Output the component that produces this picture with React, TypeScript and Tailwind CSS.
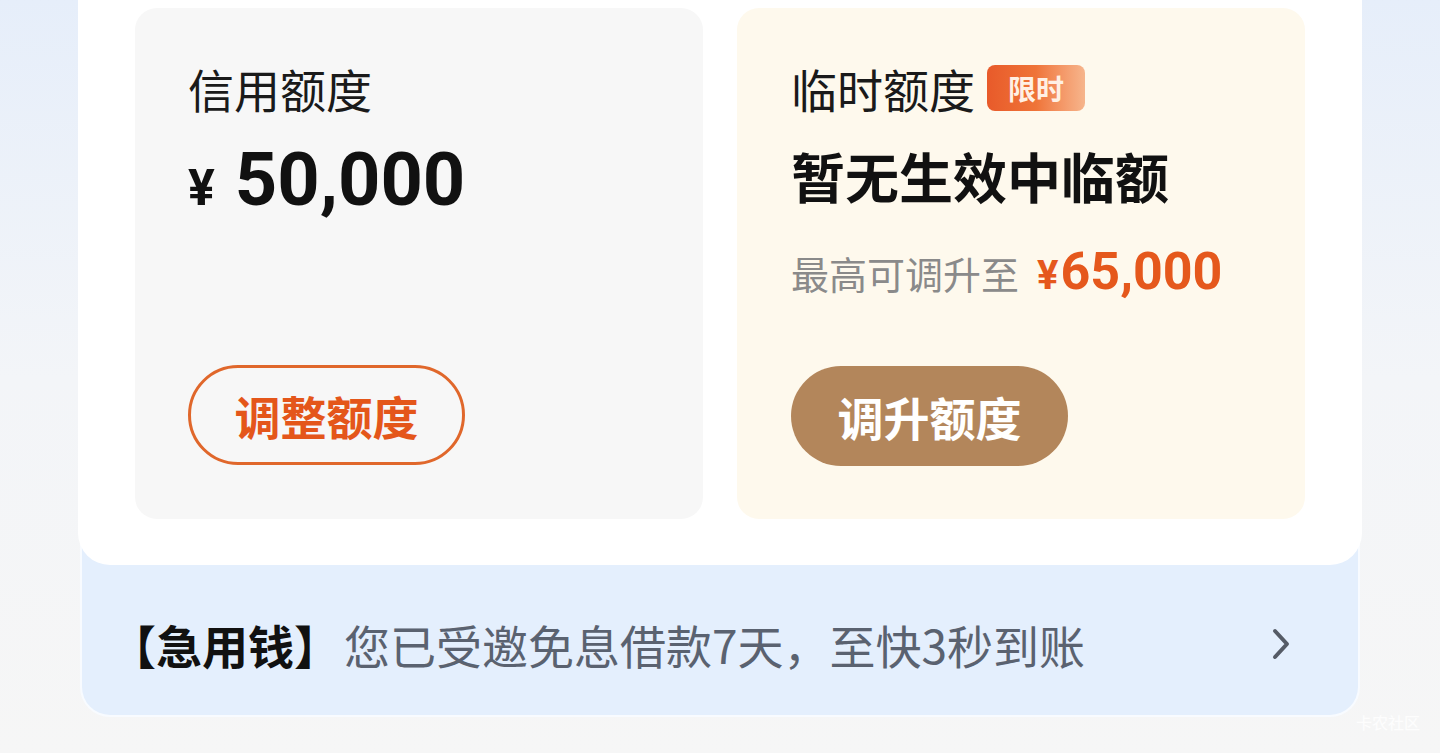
const cjk = "font-['Noto_Sans_CJK_SC','Noto_Sans',sans-serif]";
const num = "font-['Roboto','Noto_Sans_CJK_SC',sans-serif]";

function ChevronRight() {
  return (
    <svg width="22" height="34" viewBox="0 0 22 34" fill="none">
      <polyline
        points="5,4 17,17 5,30"
        stroke="#555b66"
        strokeWidth="4"
        strokeLinecap="round"
        strokeLinejoin="round"
      />
    </svg>
  );
}

export default function App() {
  return (
    <div className={`relative min-h-screen overflow-hidden bg-gradient-to-b from-[#e6eefa] via-[#f3f5f8] to-[#f6f6f6] ${cjk}`}>
      <div className="mx-auto w-[1284px]">
        {/* Quota card */}
        <div className="relative z-10 grid grid-cols-2 gap-[34px] rounded-b-[32px] bg-white px-[57px] pt-[8px] pb-[46px]">
          {/* Credit limit */}
          <div className="flex h-[511px] flex-col rounded-[22px] bg-[#f7f7f7] pl-[53px] pt-[56px] pb-[54px]">
            <div className="text-[46px] leading-[48px] text-[#1a1a1a]">信用额度</div>
            <div className={`mt-[28px] flex items-baseline gap-[20px] text-[#111] ${num}`}>
              <span className="text-[50px] font-bold leading-[80px]">¥</span>
              <span className="text-[74px] font-bold leading-[80px]">50,000</span>
            </div>
            <button className="mt-auto flex h-[100px] w-[277px] items-center justify-center rounded-full border-[3px] border-[#e0672b] text-[46px] font-bold text-[#e4561a]">
              调整额度
            </button>
          </div>

          {/* Temporary limit */}
          <div className="flex h-[511px] flex-col rounded-[22px] bg-[#fef9ed] pl-[54px] pt-[56px] pb-[53px]">
            <div className="flex items-center">
              <span className="text-[46px] leading-[48px] text-[#1a1a1a]">临时额度</span>
              <span className="ml-[12px] flex h-[46px] w-[98px] items-center justify-center rounded-[8px] bg-gradient-to-r from-[#e85a2a] via-[#ef7438] to-[#f6b58c] text-[28px] font-bold leading-none text-[#fff0e4]">
                限时
              </span>
            </div>
            <div className="mt-[34px] text-[54px] font-bold leading-[60px] text-[#111]">暂无生效中临额</div>
            <div className="mt-[34px] flex h-[64px] items-center">
              <span className="text-[38px] text-[#8a8a8a]">最高可调升至</span>
              <span className={`ml-[18px] flex items-baseline font-bold text-[#e5581c] ${num}`}>
                <span className="text-[40px]">¥</span>
                <span className="ml-[2px] text-[52px]">65,000</span>
              </span>
            </div>
            <button className="mt-auto flex h-[100px] w-[277px] items-center justify-center rounded-full bg-[#b3865b] text-[46px] font-bold text-white">
              调升额度
            </button>
          </div>
        </div>

        {/* Promo strip */}
        <div className="mx-[2px] -mt-[32px] flex h-[184px] items-center rounded-b-[30px] border-2 border-t-0 border-[#f8fbff] bg-[#e4effd] pt-[40px] pl-[28px] pr-[66px]">
          <span className="text-[46px] font-bold text-[#111]">【急用钱】</span>
          <span className="ml-[4px] text-[46px] text-[#5a6270]">您已受邀免息借款7天，至快3秒到账</span>
          <span className="ml-auto">
            <ChevronRight />
          </span>
        </div>
      </div>

      <span className="absolute right-[20px] top-[710px] text-[16px] text-white/80">卡农社区</span>
    </div>
  );
}
